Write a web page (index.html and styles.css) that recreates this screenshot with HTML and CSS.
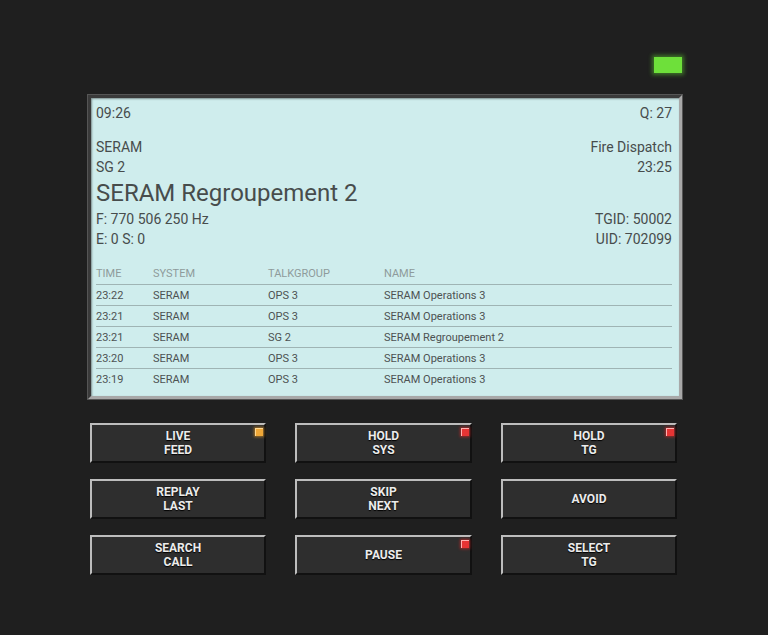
FILE: index.html
```
<!DOCTYPE html>
<html>
<head>
<meta charset="utf-8">
<link rel="stylesheet" href="styles.css">
</head>
<body>
<div class="panel">
  <div class="led-row"><div class="led"></div></div>
  <div class="screen">
    <div class="line top"><span>09:26</span><span>Q: 27</span></div>
    <div class="line"><span>SERAM</span><span>Fire Dispatch</span></div>
    <div class="line"><span>SG 2</span><span>23:25</span></div>
    <div class="title">SERAM Regroupement 2</div>
    <div class="line"><span>F: 770 506 250 Hz</span><span>TGID: 50002</span></div>
    <div class="line"><span>E: 0 S: 0</span><span>UID: 702099</span></div>
    <table class="log">
      <thead><tr><th class="c-time">TIME</th><th class="c-sys">SYSTEM</th><th class="c-tg">TALKGROUP</th><th>NAME</th></tr></thead>
      <tbody>
        <tr><td>23:22</td><td>SERAM</td><td>OPS 3</td><td>SERAM Operations 3</td></tr>
        <tr><td>23:21</td><td>SERAM</td><td>OPS 3</td><td>SERAM Operations 3</td></tr>
        <tr><td>23:21</td><td>SERAM</td><td>SG 2</td><td>SERAM Regroupement 2</td></tr>
        <tr><td>23:20</td><td>SERAM</td><td>OPS 3</td><td>SERAM Operations 3</td></tr>
        <tr><td>23:19</td><td>SERAM</td><td>OPS 3</td><td>SERAM Operations 3</td></tr>
      </tbody>
    </table>
  </div>
  <div class="buttons">
    <div class="btn"><span>LIVE<br>FEED</span><i class="ind orange"></i></div>
    <div class="btn"><span>HOLD<br>SYS</span><i class="ind red"></i></div>
    <div class="btn"><span>HOLD<br>TG</span><i class="ind red"></i></div>
    <div class="btn"><span>REPLAY<br>LAST</span></div>
    <div class="btn"><span>SKIP<br>NEXT</span></div>
    <div class="btn"><span>AVOID</span></div>
    <div class="btn"><span>SEARCH<br>CALL</span></div>
    <div class="btn"><span>PAUSE</span><i class="ind red"></i></div>
    <div class="btn"><span>SELECT<br>TG</span></div>
  </div>
</div>
</body>
</html>
```
FILE: styles.css
```
html, body {
  margin: 0;
  padding: 0;
  background: #1f1f1f;
  width: 768px;
  height: 635px;
  overflow: hidden;
  font-family: Roboto, "Liberation Sans", sans-serif;
}
.panel {
  padding: 57px 86px 0 88px;
}
.led-row {
  display: flex;
  justify-content: flex-end;
  height: 38px;
}
.led {
  width: 28px;
  height: 16px;
  background: #6ee03a;
  box-shadow: 0 0 4px 2px rgba(100, 220, 50, 0.45);
}
.screen {
  width: 576px;
  height: 293px;
  background: #cfeded;
  border-style: solid;
  border-width: 3px;
  border-color: #3a3a3a #a8a8a8 #a8a8a8 #3a3a3a;
  box-shadow: inset 1px 1px 2px rgba(0,0,0,0.4), 0 0 0 1px #555;
  padding: 5px 7px 0 5px;
  color: #474c4c;
}
.line {
  display: flex;
  justify-content: space-between;
  font-size: 14px;
  line-height: 20px;
  height: 20px;
}
.line.top {
  margin-bottom: 14px;
}
.title {
  font-size: 24px;
  line-height: 32px;
  height: 32px;
}
.log {
  width: 100%;
  border-collapse: collapse;
  margin-top: 13px;
  font-size: 11px;
}
.log th {
  text-align: left;
  font-weight: normal;
  color: #8e9b9b;
  height: 22px;
  padding: 0;
  vertical-align: middle;
  border-bottom: 1px solid #9fb4b4;
}
.log td {
  padding: 0;
  height: 20px;
  border-bottom: 1px solid #9fb4b4;
  vertical-align: middle;
  color: #4d5252;
}
.log tr:last-child td {
  border-bottom: none;
}
.c-time { width: 57px; }
.c-sys { width: 115px; }
.c-tg { width: 116px; }
.buttons {
  display: grid;
  grid-template-columns: 176px 177px 176px;
  column-gap: 29px;
  row-gap: 16px;
  margin-top: 24px;
  margin-left: 2px;
}
.btn {
  position: relative;
  height: 40px;
  box-sizing: border-box;
  background: #2e2e2e;
  border-style: solid;
  border-width: 2px;
  border-color: #bdbdbd #111 #111 #bdbdbd;
  display: flex;
  align-items: center;
  justify-content: center;
  text-align: center;
  color: #ececec;
  font-weight: bold;
  font-size: 12px;
  line-height: 14px;
  text-shadow: 0 1px 1px #000;
}
.ind {
  position: absolute;
  top: 3px;
  right: 1px;
  width: 8px;
  height: 8px;
}
.ind.orange {
  background: #f0a838;
  box-shadow: 0 0 3px 1px rgba(240, 160, 40, 0.6), inset 1px 1px 0 #ffd890;
}
.ind.red {
  background: #e63434;
  box-shadow: 0 0 3px 1px rgba(230, 40, 40, 0.6), inset 1px 1px 0 #ffb0b0;
}
```
